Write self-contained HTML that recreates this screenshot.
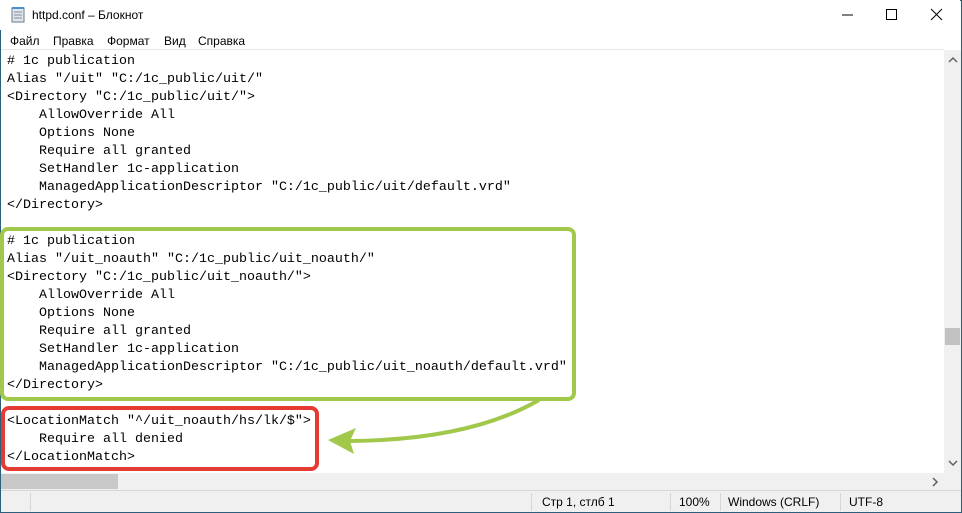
<!DOCTYPE html>
<html><head><meta charset="utf-8"><style>
*{margin:0;padding:0;box-sizing:border-box}
body{width:962px;height:513px;overflow:hidden;background:#fff;position:relative;font-family:"Liberation Sans",sans-serif}
.win{position:absolute;left:0;top:0;width:962px;height:513px;border:1px solid #2b5f7a}
.title{position:absolute;left:0;top:0;width:960px;height:30px;background:#fff;font-size:12px;color:#000}
.title span{position:absolute;left:32px;top:8px}
.menu{position:absolute;left:0;top:30px;width:960px;height:20px;font-size:12px}
.menu span{position:absolute;top:4px}
.edit{position:absolute;left:1px;top:49px;width:943px;height:424px;background:#fff;border-top:1px solid #e6e6e6}
pre{position:absolute;left:7px;top:53px;font-family:"Liberation Mono",monospace;font-size:13.33px;line-height:18px;color:#000}
.vs{position:absolute;left:944px;top:50px;width:17px;height:423px;background:#f0f0f0}
.hs{position:absolute;left:1px;top:473px;width:943px;height:17px;background:#f0f0f0}
.corner{position:absolute;left:944px;top:473px;width:17px;height:17px;background:#f0f0f0}
.status{position:absolute;left:1px;top:490px;width:960px;height:22px;background:#f0f0f0;border-top:1px solid #d7d7d7;font-size:12px}
.status span{position:absolute;top:4px}
.sep{position:absolute;top:2px;width:1px;height:18px;background:#d7d7d7}
</style></head><body>
<div class="win"></div>
<div class="title">
<svg style="position:absolute;left:10px;top:7px" width="16" height="16"><rect x="2" y="1" width="12" height="14" fill="#dfe6ee" stroke="#6a7a8a"/><line x1="4" y1="5" x2="12" y2="5" stroke="#889"/><line x1="4" y1="8" x2="12" y2="8" stroke="#889"/><line x1="4" y1="11" x2="12" y2="11" stroke="#889"/><rect x="2" y="0" width="12" height="2" fill="#4a90d0"/></svg>
<span>httpd.conf – Блокнот</span>
<svg style="position:absolute;left:838px;top:8px" width="120" height="14"><line x1="4" y1="7" x2="15" y2="7" stroke="#000"/><rect x="48.5" y="1.5" width="10" height="10" fill="none" stroke="#000"/><path d="M93 1L104 12M104 1L93 12" stroke="#000"/></svg>
</div>
<div class="menu"><span style="left:10px">Файл</span><span style="left:53px">Правка</span><span style="left:107px">Формат</span><span style="left:164px">Вид</span><span style="left:198px">Справка</span></div>
<div class="edit"></div>
<pre># 1c publication
Alias "/uit" "C:/1c_public/uit/"
&lt;Directory "C:/1c_public/uit/"&gt;
    AllowOverride All
    Options None
    Require all granted
    SetHandler 1c-application
    ManagedApplicationDescriptor "C:/1c_public/uit/default.vrd"
&lt;/Directory&gt;

# 1c publication
Alias "/uit_noauth" "C:/1c_public/uit_noauth/"
&lt;Directory "C:/1c_public/uit_noauth/"&gt;
    AllowOverride All
    Options None
    Require all granted
    SetHandler 1c-application
    ManagedApplicationDescriptor "C:/1c_public/uit_noauth/default.vrd"
&lt;/Directory&gt;

&lt;LocationMatch "^/uit_noauth/hs/lk/$"&gt;
    Require all denied
&lt;/LocationMatch&gt;</pre>
<svg style="position:absolute;left:0;top:0" width="962" height="513">
<rect x="2" y="229" width="572" height="170" rx="6" fill="none" stroke="#a2c84b" stroke-width="4"/>
<rect x="3" y="408" width="314" height="61" rx="6" fill="none" stroke="#e53b33" stroke-width="4"/>
<path d="M539 400 Q470 440 350 441" fill="none" stroke="#a2c84b" stroke-width="4"/>
<path d="M328 440 L356 428 L350 441 L354 454 Z" fill="#a2c84b"/>
</svg>
<div class="vs"><div style="position:absolute;left:1px;top:278px;width:15px;height:17px;background:#c2c2c2"></div>
<svg style="position:absolute;left:4px;top:6px" width="10" height="8"><path d="M1 6L5 2L9 6" fill="none" stroke="#606060" stroke-width="1.5"/></svg>
<svg style="position:absolute;left:4px;top:409px" width="10" height="8"><path d="M1 2L5 6L9 2" fill="none" stroke="#606060" stroke-width="1.5"/></svg></div>
<div class="hs"><div style="position:absolute;left:0;top:1px;width:117px;height:15px;background:#c8c8c8"></div>
<svg style="position:absolute;left:930px;top:4px" width="8" height="10"><path d="M2 1L6 5L2 9" fill="none" stroke="#606060" stroke-width="1.5"/></svg></div>
<div class="corner"></div>
<div class="status">
<div class="sep" style="left:29px"></div>
<div class="sep" style="left:530px"></div><span style="left:541px">Стр 1, стлб 1</span>
<div class="sep" style="left:669px"></div><span style="left:678px">100%</span>
<div class="sep" style="left:719px"></div><span style="left:727px">Windows (CRLF)</span>
<div class="sep" style="left:839px"></div><span style="left:848px">UTF-8</span>
</div>
</body></html>
